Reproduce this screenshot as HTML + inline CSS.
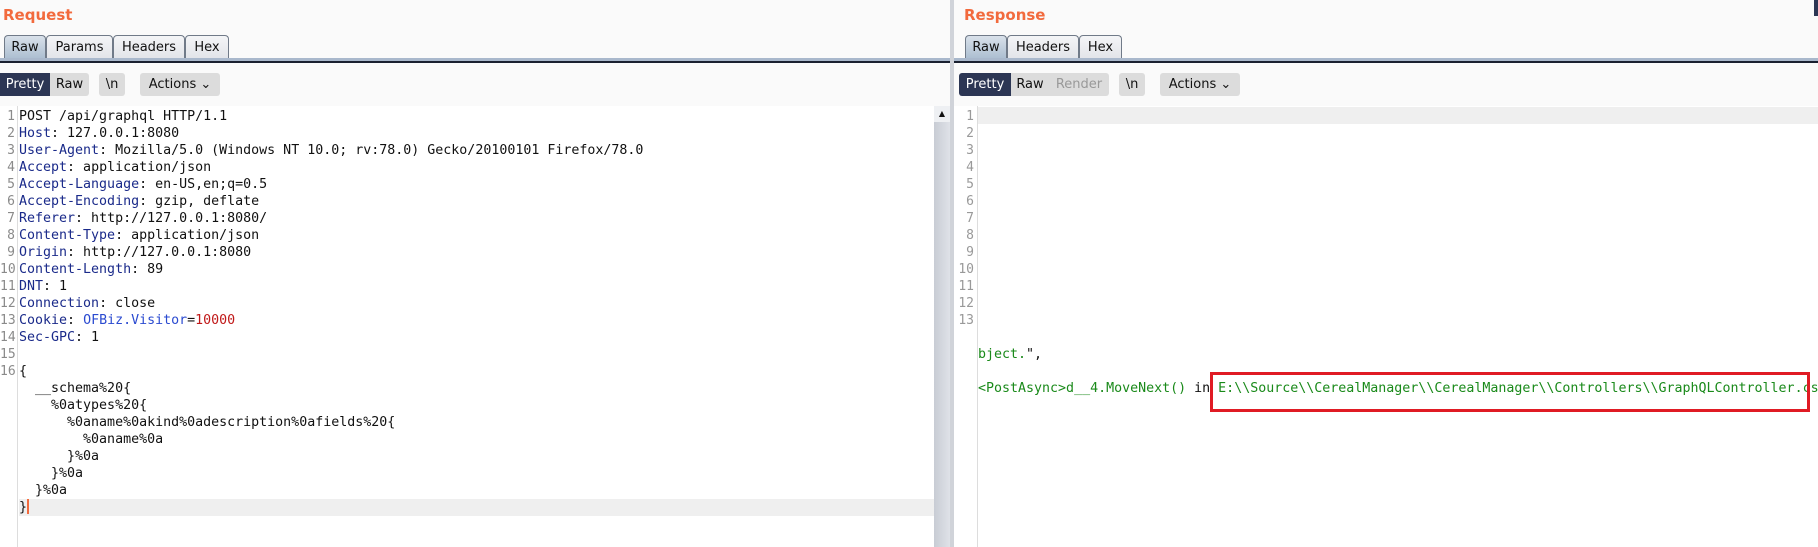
<!DOCTYPE html>
<html><head><meta charset="utf-8"><style>
*{margin:0;padding:0;box-sizing:border-box}
body{width:1818px;height:547px;overflow:hidden;background:#fafafa;position:relative;font-family:"DejaVu Sans","Liberation Sans",sans-serif;font-size:13px;color:#111}
.abs{position:absolute}
.title{font-weight:bold;font-size:15px;color:#f26a3d;top:6px}
.tab{position:absolute;top:35px;height:25px;border:1px solid #707a88;border-bottom:none;border-radius:4px 4px 0 0;background:linear-gradient(#f4f5f7,#e1e3e8);text-align:center;line-height:24px;font-size:13px}
.tab.sel{background:linear-gradient(#d9e1ea,#a9bccf)}
.tabline{position:absolute;top:58px;height:5px;border-top:3px solid #a9b8cc;border-bottom:2px solid #1a2030}
.btn{position:absolute;top:73px;height:23px;line-height:23px;background:#dcdcdc;text-align:center;font-size:13px;border-radius:3px}
.dark{background:#2c3654;color:#fff}
.editor{position:absolute;top:106px;background:#fff;bottom:0}
.code{position:absolute;font-family:"DejaVu Sans Mono","Liberation Mono",monospace;font-size:13.3px;line-height:17px;white-space:pre}
.num{color:#8a8a8a;text-align:right;font-size:13px}
.k{color:#1a2a8a}
.b{color:#2a4ad0}
.r{color:#c01818}
.g{color:#1a8a1a}
</style></head><body>
<div class="abs title" style="left:3px">Request</div>
<div class="tab sel" style="left:4px;width:42px">Raw</div>
<div class="tab" style="left:46px;width:67px">Params</div>
<div class="tab" style="left:113px;width:72px">Headers</div>
<div class="tab" style="left:185px;width:44px">Hex</div>
<div class="tabline" style="left:0;width:950px"></div>
<div class="btn dark" style="left:0;width:50px;border-radius:0 0 0 0">Pretty</div>
<div class="btn" style="left:50px;width:39px;border-radius:0 3px 3px 0">Raw</div>
<div class="btn" style="left:99px;width:26px">\n</div>
<div class="btn" style="left:140px;width:80px">Actions &#8964;</div>

<div class="editor" style="left:0;width:934px">
 <div class="abs" style="left:19px;top:393px;width:915px;height:17px;background:#efefef"></div>
 <div class="abs" style="left:17px;top:0;bottom:0;width:1px;background:#ddd"></div>
 <div class="code num" style="left:0;top:2px;width:15px">1
2
3
4
5
6
7
8
9
10
11
12
13
14
15
16</div>
 <div class="code" style="left:19px;top:2px">POST /api/graphql HTTP/1.1
<span class="k">Host</span>: 127.0.0.1:8080
<span class="k">User-Agent</span>: Mozilla/5.0 (Windows NT 10.0; rv:78.0) Gecko/20100101 Firefox/78.0
<span class="k">Accept</span>: application/json
<span class="k">Accept-Language</span>: en-US,en;q=0.5
<span class="k">Accept-Encoding</span>: gzip, deflate
<span class="k">Referer</span>: http://127.0.0.1:8080/
<span class="k">Content-Type</span>: application/json
<span class="k">Origin</span>: http://127.0.0.1:8080
<span class="k">Content-Length</span>: 89
<span class="k">DNT</span>: 1
<span class="k">Connection</span>: close
<span class="k">Cookie</span>: <span class="b">OFBiz.Visitor</span>=<span class="r">10000</span>
<span class="k">Sec-GPC</span>: 1

{
  __schema%20{
    %0atypes%20{
      %0aname%0akind%0adescription%0afields%20{
        %0aname%0a
      }%0a
    }%0a
  }%0a
}<span style="display:inline-block;width:2px;height:15px;background:#f26a3d;vertical-align:-3px"></span></div>
</div>
<div class="abs" style="left:934px;top:106px;width:16px;bottom:0;background:linear-gradient(90deg,#c8ccd4,#dfe2e8)"></div>
<div class="abs" style="left:934px;top:106px;width:16px;height:16px;background:#eef0f3;font-size:8px;text-align:center;line-height:16px">&#9650;</div>
<div class="abs" style="left:950px;top:0;width:4px;bottom:0;background:#d0d3d9"></div>

<div class="abs title" style="left:964px">Response</div>
<div class="tab sel" style="left:965px;width:42px">Raw</div>
<div class="tab" style="left:1007px;width:72px">Headers</div>
<div class="tab" style="left:1079px;width:43px">Hex</div>
<div class="tabline" style="left:954px;width:864px"></div>
<div class="btn dark" style="left:959px;width:52px;border-radius:3px 0 0 3px">Pretty</div>
<div class="btn" style="left:1011px;width:38px;border-radius:0">Raw</div>
<div class="btn" style="left:1049px;width:60px;color:#999;border-radius:0 3px 3px 0">Render</div>
<div class="btn" style="left:1119px;width:26px">\n</div>
<div class="btn" style="left:1160px;width:80px">Actions &#8964;</div>
<div class="abs" style="left:1814px;top:0;width:4px;height:16px;background:#2c3654"></div>

<div class="editor" style="left:954px;width:864px">
 <div class="abs" style="left:23px;top:1px;right:0;height:17px;background:#efefef"></div>
 <div class="abs" style="left:23px;top:0;bottom:0;width:1px;background:#ddd"></div>
 <div class="code num" style="left:0;top:2px;width:20px;color:#999">1
2
3
4
5
6
7
8
9
10
11
12
13</div>
 <div class="code g" style="left:24px;top:240px">bject.<span style="color:#111">",</span>

&lt;PostAsync&gt;d__4.MoveNext() <span style="color:#111">in</span> E:\\Source\\CerealManager\\CerealManager\\Controllers\\GraphQLController.cs</div>
 <div class="abs" style="left:256px;top:266px;width:600px;height:40px;border:3px solid #e01b24"></div>
</div>
</body></html>
